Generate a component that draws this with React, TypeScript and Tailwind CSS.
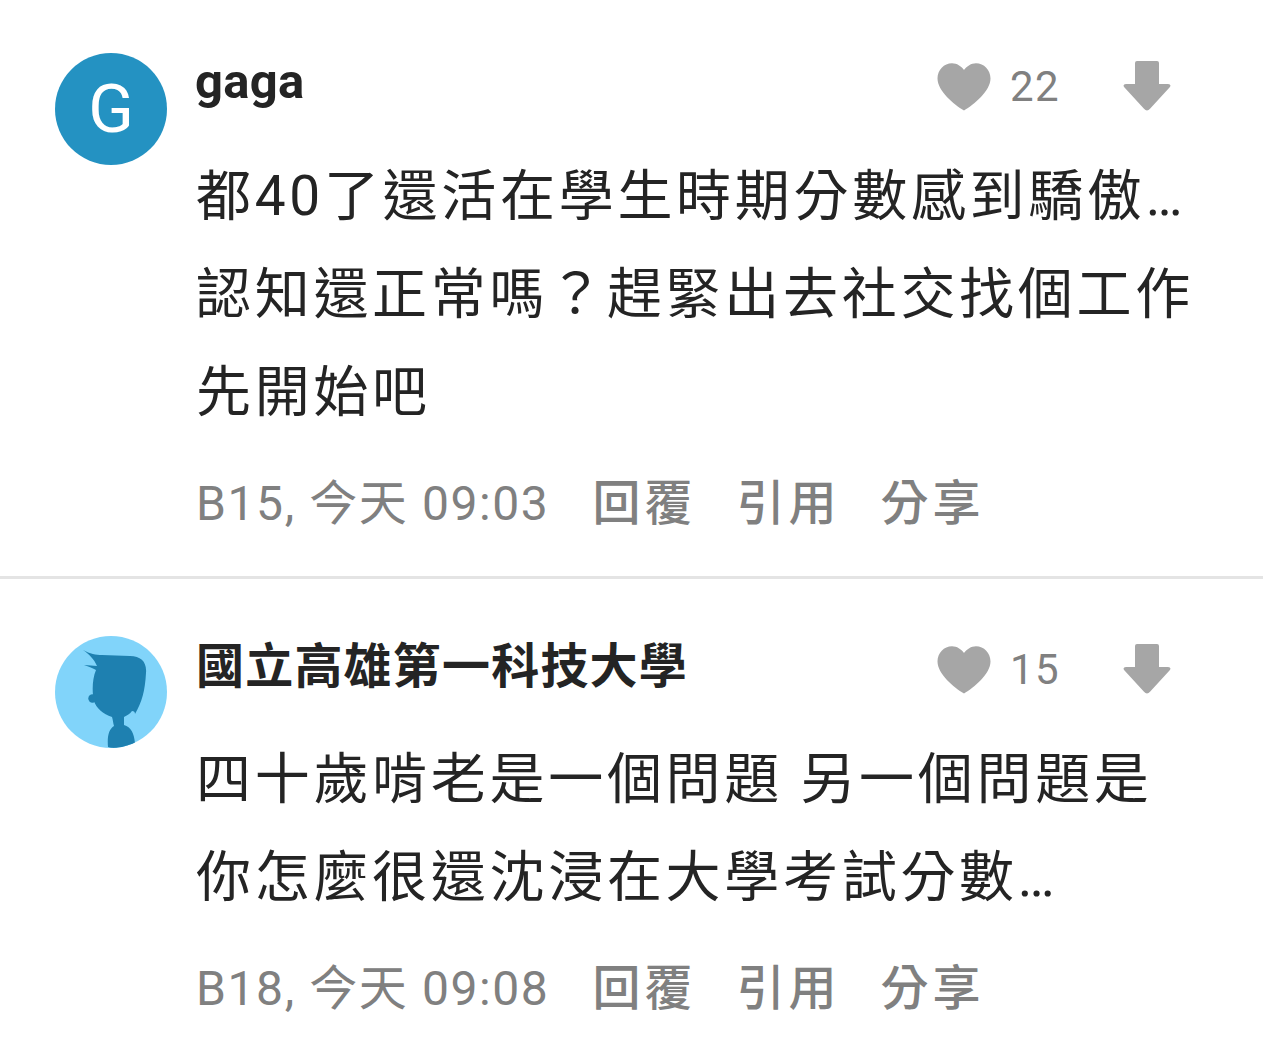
interface Comment {
  name: string;
  initial?: string;
  likes: number;
  lines: string[];
  meta: string;
}

const comments: Comment[] = [
  {
    name: 'gaga',
    initial: 'G',
    likes: 22,
    lines: ['都40了還活在學生時期分數感到驕傲…', '認知還正常嗎？趕緊出去社交找個工作', '先開始吧'],
    meta: 'B15, 今天 09:03',
  },
  {
    name: '國立高雄第一科技大學',
    likes: 15,
    lines: ['四十歲啃老是一個問題 另一個問題是', '你怎麼很還沈浸在大學考試分數…'],
    meta: 'B18, 今天 09:08',
  },
];

const actions = ['回覆', '引用', '分享'];

function Portrait() {
  return (
    <svg viewBox="0 0 112 112" className="h-28 w-28 rounded-full bg-[#81d4fa]" aria-hidden="true">
      <g fill="#1e80b0">
        <path d="M28 14 C35 18 41 19 47 19 L75 20 C86 20 92 26 91 37 C90 55 87 66 80 78 C80 76 79 75 77 75 C75 78 72 79 69 81 L69 89 C76 91 79 97 80 107 C72 112 60 113 53 111 C52 100 54 93 59 90 C58 87 58 84 57 81 C48 78 41 72 39 65 C37 57 37 43 41 34 C38 32 34 31 29 29 C34 29 38 30 42 30 C39 23 34 18 28 14 Z" />
        <circle cx="37.5" cy="62.5" r="4.2" />
      </g>
    </svg>
  );
}

function Heart() {
  return (
    <svg viewBox="0 0 54 48" className="h-12 w-[54px]" fill="#a6a6a6" aria-hidden="true">
      <path d="M27 47.5 C17 41.5 0.5 28 0.5 15.5 C0.5 7 7 0.2 15 0.2 C20 0.2 24 3 27 7 C30 3 34 0.2 39 0.2 C47 0.2 53.5 7 53.5 15.5 C53.5 28 37 41.5 27 47.5 Z" />
    </svg>
  );
}

function ArrowDown() {
  return (
    <svg viewBox="0 0 50 52" className="h-[52px] w-[50px]" fill="#a6a6a6" aria-hidden="true">
      <path d="M15 1 H35 Q37 1 37 3 V24 H46 Q50 24.5 47.5 27.5 L28 48.8 Q25 52.2 22 48.8 L2.5 27.5 Q0 24.5 4 24 H13 V3 Q13 1 15 1 Z" />
    </svg>
  );
}

function CommentItem({ comment }: { comment: Comment }) {
  return (
    <article className="flex pl-[55px] pt-[53px]">
      {comment.initial ? (
        <div className="flex h-28 w-28 shrink-0 items-center justify-center rounded-full bg-[#2492c2] text-[67px] text-white">
          {comment.initial}
        </div>
      ) : (
        <div className="shrink-0">
          <Portrait />
        </div>
      )}
      <div className="ml-[29px] flex-1">
        <header className="flex h-[66px] items-center justify-between pr-[91px]">
          <h2
            className={`whitespace-nowrap font-bold leading-[60px] ${
              comment.initial ? '-ml-px pb-2 text-[49px] tracking-[0.3px]' : 'pb-1 text-[48px] tracking-[1.2px]'
            }`}
          >
            {comment.name}
          </h2>
          <div className="flex items-center text-[#808080]">
            <div className="pt-[2px]">
              <Heart />
            </div>
            <span className="ml-[19px] text-[42px] tracking-[1.4px]">{comment.likes}</span>
            <div className="ml-[62px]">
              <ArrowDown />
            </div>
          </div>
        </header>
        <div className="mt-7 text-[55px] leading-[98px] tracking-[3.7px]">
          {comment.lines.map((line) => (
            <p key={line} className="whitespace-nowrap">
              {line}
            </p>
          ))}
        </div>
        <footer className="mt-7 flex whitespace-nowrap text-[48px] leading-[70px] text-[#808080]">
          <span className="tracking-[1.6px]">{comment.meta}</span>
          <div className="ml-[43px] flex gap-10 font-medium tracking-[4px]">
            {actions.map((action) => (
              <span key={action}>{action}</span>
            ))}
          </div>
        </footer>
      </div>
    </article>
  );
}

export default function App() {
  return (
    <main className="h-[1046px] w-[1263px] overflow-hidden bg-white font-[Roboto,'Noto_Sans_CJK_TC',sans-serif] text-[#242424]">
      <CommentItem comment={comments[0]} />
      <hr className="mb-1 mt-[37px] border-t-3 border-[#e4e4e4]" />
      <CommentItem comment={comments[1]} />
    </main>
  );
}
